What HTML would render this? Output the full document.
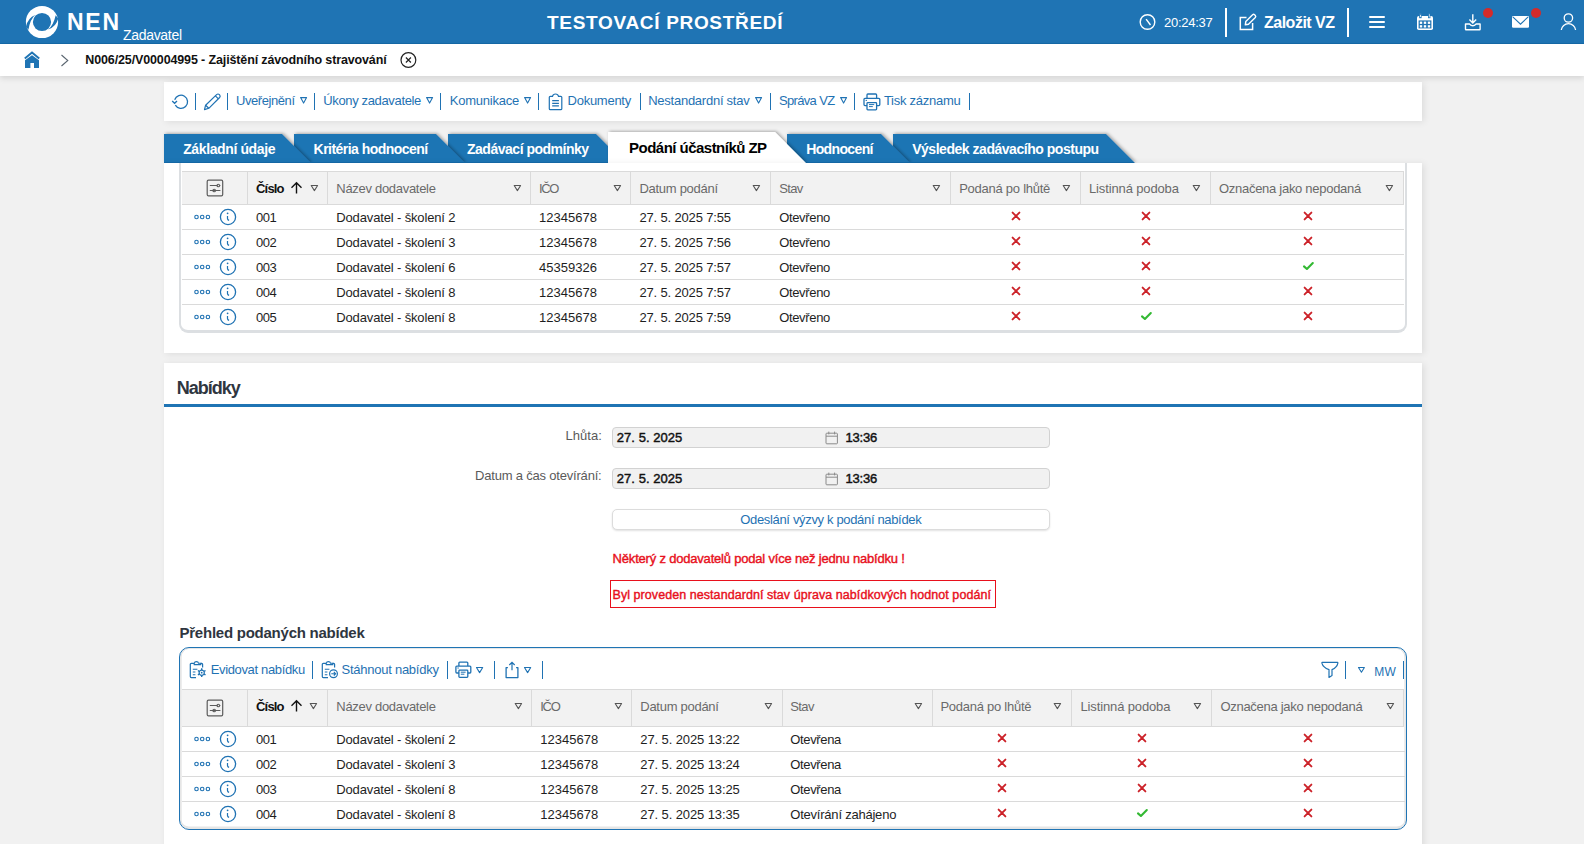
<!DOCTYPE html>
<html><head><meta charset="utf-8"><style>
html,body{margin:0;padding:0;}
body{width:1584px;height:844px;overflow:hidden;position:relative;background:#f1f1f1;font-family:"Liberation Sans",sans-serif;}
.t{position:absolute;white-space:nowrap;}
svg{overflow:visible;}
</style></head><body>
<div style="position:absolute;left:0px;top:0px;width:1584px;height:44px;background:#1f74b4;"></div>
<div style="position:absolute;left:0px;top:43px;width:1584px;height:1px;background:#156aa9;"></div>
<svg style="position:absolute;left:24px;top:4px;" width="36" height="36" viewBox="0 0 36 36">
<defs><mask id="lm"><rect width="36" height="36" fill="#fff"/>
<circle cx="18" cy="18" r="9.1" fill="#000"/>
<path d="M2 22.8 Q3.8 14 11.2 11.1 Q6.4 14.8 4.4 25.8 Z" fill="#000"/>
<path d="M34.2 14.4 Q32.4 22.4 24.2 25.4 Q29.4 21.4 31.7 11.2 Z" fill="#000"/>
</mask></defs>
<circle cx="18" cy="18" r="16.1" fill="#fff" mask="url(#lm)"/>
</svg>
<div class="t" style="left:67.00px;top:10.50px;font-size:23px;line-height:23px;color:#fff;font-weight:bold;letter-spacing:1.750px;">NEN</div>
<div class="t" style="left:123.00px;top:27.70px;font-size:14px;line-height:14px;color:#fff;letter-spacing:-0.312px;">Zadavatel</div>
<div class="t" style="left:547.00px;top:13.00px;font-size:19px;line-height:19px;color:#fff;font-weight:bold;letter-spacing:0.688px;">TESTOVACÍ PROSTŘEDÍ</div>
<svg style="position:absolute;left:1138px;top:13px;" width="19" height="19" viewBox="0 0 19 19"><circle cx="9.5" cy="9" r="7.3" fill="none" stroke="#fff" stroke-width="1.4"/><path d="M8.1 6.2 L12.5 12" stroke="#fff" stroke-width="1.4" fill="none"/></svg>
<div class="t" style="left:1164.00px;top:15.80px;font-size:13px;line-height:13px;color:#fff;letter-spacing:-0.275px;">20:24:37</div>
<div style="position:absolute;left:1225px;top:8px;width:2px;height:29px;background:#fff;"></div>
<svg style="position:absolute;left:1238px;top:12px;" width="20" height="20" viewBox="0 0 20 20"><path d="M8.5 5.5 H2.3 V17.6 H14.6 V11" fill="none" stroke="#fff" stroke-width="1.5"/><path d="M7.3 12.8 L7.8 9.6 L14.6 2.8 Q15.6 1.9 16.6 2.8 L17.3 3.5 Q18.2 4.5 17.3 5.5 L10.5 12.3 Z" fill="none" stroke="#fff" stroke-width="1.4" stroke-linejoin="round"/></svg>
<div class="t" style="left:1264.00px;top:14.50px;font-size:16px;line-height:16px;color:#fff;font-weight:bold;letter-spacing:-0.500px;">Založit VZ</div>
<div style="position:absolute;left:1347px;top:8px;width:2px;height:29px;background:#fff;"></div>
<div style="position:absolute;left:1369px;top:15.5px;width:16px;height:2.3px;background:#fff;border-radius:1.2px;"></div>
<div style="position:absolute;left:1369px;top:20.8px;width:16px;height:2.3px;background:#fff;border-radius:1.2px;"></div>
<div style="position:absolute;left:1369px;top:26.2px;width:16px;height:2.3px;background:#fff;border-radius:1.2px;"></div>
<svg style="position:absolute;left:1416px;top:13px;" width="18" height="18" viewBox="0 0 18 18"><rect x="1" y="3" width="16" height="14" rx="1.8" fill="#fff"/>
<rect x="2.6" y="7.4" width="12.8" height="8" fill="#1f74b4"/>
<g fill="#fff"><rect x="3.8" y="8.6" width="2.4" height="2.3"/><rect x="7.8" y="8.6" width="2.4" height="2.3"/><rect x="11.8" y="8.6" width="2.4" height="2.3"/>
<rect x="3.8" y="12.2" width="2.4" height="2.3"/><rect x="7.8" y="12.2" width="2.4" height="2.3"/><rect x="11.8" y="12.2" width="2.4" height="2.3"/></g>
<rect x="3.6" y="0.8" width="1.6" height="4" fill="#fff" stroke="#1f74b4" stroke-width="0.8"/><rect x="12.4" y="0.8" width="1.6" height="4" fill="#fff" stroke="#1f74b4" stroke-width="0.8"/></svg>
<svg style="position:absolute;left:1463px;top:13px;" width="20" height="20" viewBox="0 0 20 20"><path d="M9.8 1.3 V9.5 M6.4 6.6 L9.8 10 L13.2 6.6" fill="none" stroke="#fff" stroke-width="1.4"/>
<path d="M2.5 11 H6.5 Q9.8 14.5 13.1 11 H17.1 V16.3 Q17.1 16.8 16.6 16.8 H3 Q2.5 16.8 2.5 16.3 Z" fill="none" stroke="#fff" stroke-width="1.4" stroke-linejoin="round"/></svg>
<svg style="position:absolute;left:1511px;top:14px;" width="20" height="16" viewBox="0 0 20 16"><rect x="1" y="2" width="17" height="11.7" rx="1.2" fill="#fff"/><path d="M1.8 2.8 L9.5 10.2 L17.2 2.8" fill="none" stroke="#1f74b4" stroke-width="1.1"/></svg>
<div style="position:absolute;left:1483px;top:8px;width:10px;height:10px;background:#d32b2b;border-radius:50%;"></div>
<div style="position:absolute;left:1531px;top:8px;width:10px;height:10px;background:#d32b2b;border-radius:50%;"></div>
<svg style="position:absolute;left:1559px;top:12px;" width="20" height="20" viewBox="0 0 20 20"><circle cx="9.4" cy="6" r="4.2" fill="none" stroke="#fff" stroke-width="1.3"/><path d="M2.3 18 A7.2 7.2 0 0 1 16.6 18" fill="none" stroke="#fff" stroke-width="1.3"/></svg>
<div style="position:absolute;left:0px;top:44px;width:1584px;height:32px;background:#fff;box-shadow:0 2px 6px rgba(0,0,0,0.13);z-index:2;"></div>
<svg style="position:absolute;left:22px;top:50px;z-index:3;" width="20" height="20" viewBox="0 0 20 20"><path d="M2.8 8.6 L10 2.6 L17.2 8.6" fill="none" stroke="#1f74b4" stroke-width="2"/>
<path d="M3 10.3 L10 5.2 L17 10.3 V18 H12 V13 H8.4 V18 H3 Z" fill="#1f74b4"/></svg>
<svg style="position:absolute;left:58px;top:52px;z-index:3;" width="14" height="16" viewBox="0 0 14 16"><path d="M3.5 3 L9.8 8.5 L3.5 14" fill="none" stroke="#5a6570" stroke-width="1.1"/></svg>
<div class="t" style="left:85.30px;top:53.90px;font-size:12.5px;line-height:12.5px;color:#111;font-weight:bold;letter-spacing:-0.131px;z-index:3;">N006/25/V00004995 - Zajištění závodního stravování</div>
<svg style="position:absolute;left:398px;top:50px;z-index:3;" width="20" height="20" viewBox="0 0 20 20"><circle cx="10.4" cy="10" r="7.4" fill="none" stroke="#222" stroke-width="1.2"/><path d="M7.9 7.5 L12.9 12.5 M12.9 7.5 L7.9 12.5" stroke="#222" stroke-width="1.2"/></svg>
<div style="position:absolute;left:164px;top:82px;width:1258px;height:39px;background:#fff;box-shadow:2px 1px 7px rgba(0,0,0,0.09);"></div>
<svg style="position:absolute;left:170px;top:92px;" width="20" height="20" viewBox="0 0 20 20"><path d="M5.3 13.2 A6.6 6.6 0 1 0 4.7 7.7" fill="none" stroke="#1f72b3" stroke-width="1.3"/>
<path d="M2.2 9 L4.6 11.3 L7 9" fill="none" stroke="#1f72b3" stroke-width="1.3"/></svg>
<div style="position:absolute;left:195px;top:93px;width:1.2px;height:17px;background:#1f72b3;"></div>
<svg style="position:absolute;left:202px;top:92px;" width="20" height="20" viewBox="0 0 20 20"><path d="M2.5 17.6 L3.6 13.2 L14.6 2.6 Q16 1.4 17.4 2.6 L17.6 2.8 Q18.8 4.2 17.6 5.5 L6.8 16.3 Z" fill="none" stroke="#1f72b3" stroke-width="1.2" stroke-linejoin="round"/>
<path d="M3.6 13.2 L6.8 16.3 M13.4 3.8 L16.4 6.8" stroke="#1f72b3" stroke-width="1.2"/></svg>
<div style="position:absolute;left:227px;top:93px;width:1.2px;height:17px;background:#1f72b3;"></div>
<div class="t" style="left:236.00px;top:94.40px;font-size:13px;line-height:13px;color:#1f72b3;letter-spacing:-0.431px;">Uveřejnění</div>
<svg style="position:absolute;left:298.5px;top:96px;" width="9.2" height="9.2" viewBox="0 0 9.2 9.2"><path d="M1.6 1.6 H7.6000000000000005 L4.6 7.12 Z" fill="none" stroke="#1f72b3" stroke-width="1.1" stroke-linejoin="round"/></svg>
<div style="position:absolute;left:314px;top:93px;width:1.2px;height:17px;background:#1f72b3;"></div>
<div class="t" style="left:323.30px;top:94.40px;font-size:13px;line-height:13px;color:#1f72b3;letter-spacing:-0.358px;">Úkony zadavatele</div>
<svg style="position:absolute;left:425px;top:96px;" width="9.2" height="9.2" viewBox="0 0 9.2 9.2"><path d="M1.6 1.6 H7.6000000000000005 L4.6 7.12 Z" fill="none" stroke="#1f72b3" stroke-width="1.1" stroke-linejoin="round"/></svg>
<div style="position:absolute;left:440px;top:93px;width:1.2px;height:17px;background:#1f72b3;"></div>
<div class="t" style="left:449.70px;top:94.40px;font-size:13px;line-height:13px;color:#1f72b3;letter-spacing:-0.211px;">Komunikace</div>
<svg style="position:absolute;left:523.4px;top:96px;" width="9.2" height="9.2" viewBox="0 0 9.2 9.2"><path d="M1.6 1.6 H7.6000000000000005 L4.6 7.12 Z" fill="none" stroke="#1f72b3" stroke-width="1.1" stroke-linejoin="round"/></svg>
<div style="position:absolute;left:538px;top:93px;width:1.2px;height:17px;background:#1f72b3;"></div>
<svg style="position:absolute;left:546px;top:92px;" width="18" height="19" viewBox="0 0 18 19"><path d="M6.5 4.3 H4.3 Q3.3 4.3 3.3 5.3 V16.8 Q3.3 17.7 4.3 17.7 H14.8 Q15.8 17.7 15.8 16.8 V5.3 Q15.8 4.3 14.8 4.3 H12.5 Q12 2 9.5 2 Q7 2 6.5 4.3 Z" fill="none" stroke="#1f72b3" stroke-width="1.2"/>
<path d="M6.2 8.7 H12.9 M6.2 11.4 H12.9 M6.2 13.9 H12.9" stroke="#1f72b3" stroke-width="1.3"/></svg>
<div class="t" style="left:567.60px;top:94.40px;font-size:13px;line-height:13px;color:#1f72b3;letter-spacing:-0.269px;">Dokumenty</div>
<div style="position:absolute;left:639.5px;top:93px;width:1.2px;height:17px;background:#1f72b3;"></div>
<div class="t" style="left:648.20px;top:94.40px;font-size:13px;line-height:13px;color:#1f72b3;letter-spacing:-0.250px;">Nestandardní stav</div>
<svg style="position:absolute;left:754px;top:96px;" width="9.2" height="9.2" viewBox="0 0 9.2 9.2"><path d="M1.6 1.6 H7.6000000000000005 L4.6 7.12 Z" fill="none" stroke="#1f72b3" stroke-width="1.1" stroke-linejoin="round"/></svg>
<div style="position:absolute;left:769.5px;top:93px;width:1.2px;height:17px;background:#1f72b3;"></div>
<div class="t" style="left:778.90px;top:94.40px;font-size:13px;line-height:13px;color:#1f72b3;letter-spacing:-0.647px;">Správa VZ</div>
<svg style="position:absolute;left:839.4px;top:96px;" width="9.2" height="9.2" viewBox="0 0 9.2 9.2"><path d="M1.6 1.6 H7.6000000000000005 L4.6 7.12 Z" fill="none" stroke="#1f72b3" stroke-width="1.1" stroke-linejoin="round"/></svg>
<div style="position:absolute;left:854.3px;top:93px;width:1.2px;height:17px;background:#1f72b3;"></div>
<svg style="position:absolute;left:862px;top:92px;" width="20" height="20" viewBox="0 0 20 20"><path d="M5 6.3 V2.9 Q5 2 5.9 2 H13.7 Q14.6 2 14.6 2.9 V6.3" fill="none" stroke="#1f72b3" stroke-width="1.3"/>
<path d="M5 13.6 H3 Q2 13.6 2 12.6 V7.3 Q2 6.3 3 6.3 H16.8 Q17.8 6.3 17.8 7.3 V12.6 Q17.8 13.6 16.8 13.6 H14.6" fill="none" stroke="#1f72b3" stroke-width="1.3"/>
<rect x="5" y="10.6" width="9.6" height="7.3" rx="0.8" fill="none" stroke="#1f72b3" stroke-width="1.3"/>
<path d="M7 12.6 H12.2 M7 14.6 H10.8 M3.6 8.4 H5" stroke="#1f72b3" stroke-width="1"/></svg>
<div class="t" style="left:883.90px;top:94.20px;font-size:13px;line-height:13px;color:#1f72b3;letter-spacing:-0.250px;">Tisk záznamu</div>
<div style="position:absolute;left:969px;top:93px;width:1.2px;height:17px;background:#1f72b3;"></div>
<svg style="position:absolute;left:0px;top:0px;" width="1584" height="170" viewBox="0 0 1584 170"><defs><filter id="ts" x="-10%" y="-30%" width="120%" height="160%"><feDropShadow dx="1.4" dy="-0.8" stdDeviation="1.4" flood-color="#000" flood-opacity="0.3"/></filter></defs><polygon points="893,163 893,134 1106,134 1135,163" fill="#1f74b4" filter="url(#ts)"/><polygon points="787,163 787,134 881,134 910,163" fill="#1f74b4" filter="url(#ts)"/><polygon points="448,163 448,134 596,134 625,163" fill="#1f74b4" filter="url(#ts)"/><polygon points="294,163 294,134 436,134 465,163" fill="#1f74b4" filter="url(#ts)"/><polygon points="164,163 164,134 282,134 311,163" fill="#1f74b4" filter="url(#ts)"/><rect x="164" y="162" width="146" height="1" fill="#156aa9"/><rect x="294" y="162" width="170" height="1" fill="#156aa9"/><rect x="448" y="162" width="176" height="1" fill="#156aa9"/><rect x="787" y="162" width="122" height="1" fill="#156aa9"/><rect x="893" y="162" width="241" height="1" fill="#156aa9"/><polygon points="608,163 608,132 775,132 806,163" fill="#fff" filter="url(#ts)"/></svg>
<div class="t" style="left:183.20px;top:141.80px;font-size:14px;line-height:14px;color:#fff;font-weight:bold;letter-spacing:-0.381px;">Základní údaje</div>
<div class="t" style="left:313.60px;top:141.80px;font-size:14px;line-height:14px;color:#fff;font-weight:bold;letter-spacing:-0.537px;">Kritéria hodnocení</div>
<div class="t" style="left:467.00px;top:141.80px;font-size:14px;line-height:14px;color:#fff;font-weight:bold;letter-spacing:-0.487px;">Zadávací podmínky</div>
<div class="t" style="left:629.10px;top:139.80px;font-size:15px;line-height:15px;color:#000;font-weight:bold;letter-spacing:-0.528px;">Podání účastníků ZP</div>
<div class="t" style="left:806.20px;top:141.80px;font-size:14px;line-height:14px;color:#fff;font-weight:bold;letter-spacing:-0.634px;">Hodnocení</div>
<div class="t" style="left:912.20px;top:141.80px;font-size:14px;line-height:14px;color:#fff;font-weight:bold;letter-spacing:-0.471px;">Výsledek zadávacího postupu</div>
<div style="position:absolute;left:164px;top:163px;width:1258px;height:190px;background:#fff;box-shadow:2px 1px 7px rgba(0,0,0,0.09);"></div>
<div style="position:absolute;left:179.4px;top:163px;width:1227.6px;height:169.5px;border:2.6px solid #dcdfe2;border-bottom-width:3.6px;border-top:none;border-radius:0 0 9px 9px;box-sizing:border-box;"></div>
<div style="position:absolute;left:182px;top:171px;width:1222px;height:34px;background:#f2f2f2;border-top:1px solid #dadada;border-bottom:1px solid #dadada;border-right:1px solid #dadada;box-sizing:border-box;"></div>
<div style="position:absolute;left:247px;top:171px;width:1px;height:33px;background:#dadada;"></div>
<div style="position:absolute;left:327px;top:171px;width:1px;height:33px;background:#dadada;"></div>
<div style="position:absolute;left:530px;top:171px;width:1px;height:33px;background:#dadada;"></div>
<div style="position:absolute;left:630px;top:171px;width:1px;height:33px;background:#dadada;"></div>
<div style="position:absolute;left:770px;top:171px;width:1px;height:33px;background:#dadada;"></div>
<div style="position:absolute;left:950px;top:171px;width:1px;height:33px;background:#dadada;"></div>
<div style="position:absolute;left:1080px;top:171px;width:1px;height:33px;background:#dadada;"></div>
<div style="position:absolute;left:1210px;top:171px;width:1px;height:33px;background:#dadada;"></div>
<svg style="position:absolute;left:206.0px;top:178.5px;" width="18" height="18" viewBox="0 0 18 18"><rect x="1.2" y="1.1" width="15.5" height="15.8" rx="1.3" fill="none" stroke="#5c5c5c" stroke-width="1.2"/><path d="M3.8 6.5 H11.6 M3.8 11.5 H14.4 M13.2 6.5 H14.4" stroke="#5c5c5c" stroke-width="1.1"/><circle cx="12.3" cy="6.5" r="1.3" fill="none" stroke="#5c5c5c" stroke-width="1.1"/><circle cx="8.2" cy="11.5" r="1.3" fill="none" stroke="#5c5c5c" stroke-width="1.1"/></svg>
<div class="t" style="left:256.00px;top:182.00px;font-size:13px;line-height:13px;color:#111;font-weight:bold;letter-spacing:-0.812px;">Číslo</div>
<svg style="position:absolute;left:290.2px;top:180.5px;" width="13" height="14" viewBox="0 0 13 14"><path d="M6.5 12.5 V1.8 M1.5 6.8 L6.5 1.8 L11.5 6.8" fill="none" stroke="#111" stroke-width="1.4"/></svg>
<svg style="position:absolute;left:309.8px;top:184px;" width="10" height="9" viewBox="0 0 10 9"><path d="M1.2 1.5 H7.6 L4.4 6.6 Z" fill="none" stroke="#555" stroke-width="1.05" stroke-linejoin="round"/></svg>
<div class="t" style="left:336.30px;top:182.00px;font-size:13px;line-height:13px;color:#6a6a6a;letter-spacing:-0.295px;">Název dodavatele</div>
<svg style="position:absolute;left:512.5px;top:184px;" width="10" height="9" viewBox="0 0 10 9"><path d="M1.2 1.5 H7.6 L4.4 6.6 Z" fill="none" stroke="#555" stroke-width="1.05" stroke-linejoin="round"/></svg>
<div class="t" style="left:538.90px;top:182.00px;font-size:13px;line-height:13px;color:#6a6a6a;letter-spacing:-1.312px;">IČO</div>
<svg style="position:absolute;left:612.6px;top:184px;" width="10" height="9" viewBox="0 0 10 9"><path d="M1.2 1.5 H7.6 L4.4 6.6 Z" fill="none" stroke="#555" stroke-width="1.05" stroke-linejoin="round"/></svg>
<div class="t" style="left:639.40px;top:182.00px;font-size:13px;line-height:13px;color:#6a6a6a;letter-spacing:-0.275px;">Datum podání</div>
<svg style="position:absolute;left:752.3px;top:184px;" width="10" height="9" viewBox="0 0 10 9"><path d="M1.2 1.5 H7.6 L4.4 6.6 Z" fill="none" stroke="#555" stroke-width="1.05" stroke-linejoin="round"/></svg>
<div class="t" style="left:779.20px;top:182.00px;font-size:13px;line-height:13px;color:#6a6a6a;letter-spacing:-0.633px;">Stav</div>
<svg style="position:absolute;left:932.3px;top:184px;" width="10" height="9" viewBox="0 0 10 9"><path d="M1.2 1.5 H7.6 L4.4 6.6 Z" fill="none" stroke="#555" stroke-width="1.05" stroke-linejoin="round"/></svg>
<div class="t" style="left:959.20px;top:182.00px;font-size:13px;line-height:13px;color:#6a6a6a;letter-spacing:-0.254px;">Podaná po lhůtě</div>
<svg style="position:absolute;left:1062px;top:184px;" width="10" height="9" viewBox="0 0 10 9"><path d="M1.2 1.5 H7.6 L4.4 6.6 Z" fill="none" stroke="#555" stroke-width="1.05" stroke-linejoin="round"/></svg>
<div class="t" style="left:1089.00px;top:182.00px;font-size:13px;line-height:13px;color:#6a6a6a;letter-spacing:-0.134px;">Listinná podoba</div>
<svg style="position:absolute;left:1192px;top:184px;" width="10" height="9" viewBox="0 0 10 9"><path d="M1.2 1.5 H7.6 L4.4 6.6 Z" fill="none" stroke="#555" stroke-width="1.05" stroke-linejoin="round"/></svg>
<div class="t" style="left:1219.00px;top:182.00px;font-size:13px;line-height:13px;color:#6a6a6a;letter-spacing:-0.283px;">Označena jako nepodaná</div>
<svg style="position:absolute;left:1385px;top:184px;" width="10" height="9" viewBox="0 0 10 9"><path d="M1.2 1.5 H7.6 L4.4 6.6 Z" fill="none" stroke="#555" stroke-width="1.05" stroke-linejoin="round"/></svg>
<div style="position:absolute;left:182px;top:229px;width:1222px;height:1px;background:#dadada;"></div>
<div style="position:absolute;left:182px;top:254px;width:1222px;height:1px;background:#dadada;"></div>
<div style="position:absolute;left:182px;top:279px;width:1222px;height:1px;background:#dadada;"></div>
<div style="position:absolute;left:182px;top:304px;width:1222px;height:1px;background:#dadada;"></div>
<svg style="position:absolute;left:194px;top:213px;" width="18" height="8" viewBox="0 0 18 8"><circle cx="2.5" cy="4" r="1.75" fill="none" stroke="#1f72b3" stroke-width="1.15"/><circle cx="8.2" cy="4" r="1.75" fill="none" stroke="#1f72b3" stroke-width="1.15"/><circle cx="13.9" cy="4" r="1.75" fill="none" stroke="#1f72b3" stroke-width="1.15"/></svg>
<svg style="position:absolute;left:219px;top:208px;" width="18" height="18" viewBox="0 0 18 18"><circle cx="9" cy="9" r="7.6" fill="none" stroke="#1f72b3" stroke-width="1.3"/><circle cx="8.6" cy="5.3" r="0.9" fill="#1f72b3"/><path d="M8.5 7.9 V10.6 Q8.6 11.9 10.1 12.3" fill="none" stroke="#1f72b3" stroke-width="1.2"/></svg>
<div class="t" style="left:256.00px;top:211.00px;font-size:13px;line-height:13px;color:#1e1e1e;letter-spacing:-0.525px;">001</div>
<div class="t" style="left:336.30px;top:211.00px;font-size:13px;line-height:13px;color:#1e1e1e;letter-spacing:-0.146px;">Dodavatel - školení 2</div>
<div class="t" style="left:538.90px;top:211.00px;font-size:13px;line-height:13px;color:#1e1e1e;letter-spacing:0.018px;">12345678</div>
<div class="t" style="left:639.40px;top:211.00px;font-size:13px;line-height:13px;color:#1e1e1e;letter-spacing:-0.153px;">27. 5. 2025 7:55</div>
<div class="t" style="left:779.20px;top:211.00px;font-size:13px;line-height:13px;color:#1e1e1e;letter-spacing:-0.343px;">Otevřeno</div>
<svg style="position:absolute;left:1011.2px;top:211px;" width="10" height="10" viewBox="0 0 10 10"><path d="M1.6 1.6 L8.4 8.4 M8.4 1.6 L1.6 8.4" stroke="#cc2229" stroke-width="1.9" stroke-linecap="round"/></svg>
<svg style="position:absolute;left:1141.1px;top:211px;" width="10" height="10" viewBox="0 0 10 10"><path d="M1.6 1.6 L8.4 8.4 M8.4 1.6 L1.6 8.4" stroke="#cc2229" stroke-width="1.9" stroke-linecap="round"/></svg>
<svg style="position:absolute;left:1302.8px;top:211px;" width="10" height="10" viewBox="0 0 10 10"><path d="M1.6 1.6 L8.4 8.4 M8.4 1.6 L1.6 8.4" stroke="#cc2229" stroke-width="1.9" stroke-linecap="round"/></svg>
<svg style="position:absolute;left:194px;top:238px;" width="18" height="8" viewBox="0 0 18 8"><circle cx="2.5" cy="4" r="1.75" fill="none" stroke="#1f72b3" stroke-width="1.15"/><circle cx="8.2" cy="4" r="1.75" fill="none" stroke="#1f72b3" stroke-width="1.15"/><circle cx="13.9" cy="4" r="1.75" fill="none" stroke="#1f72b3" stroke-width="1.15"/></svg>
<svg style="position:absolute;left:219px;top:233px;" width="18" height="18" viewBox="0 0 18 18"><circle cx="9" cy="9" r="7.6" fill="none" stroke="#1f72b3" stroke-width="1.3"/><circle cx="8.6" cy="5.3" r="0.9" fill="#1f72b3"/><path d="M8.5 7.9 V10.6 Q8.6 11.9 10.1 12.3" fill="none" stroke="#1f72b3" stroke-width="1.2"/></svg>
<div class="t" style="left:256.00px;top:236.00px;font-size:13px;line-height:13px;color:#1e1e1e;letter-spacing:-0.525px;">002</div>
<div class="t" style="left:336.30px;top:236.00px;font-size:13px;line-height:13px;color:#1e1e1e;letter-spacing:-0.146px;">Dodavatel - školení 3</div>
<div class="t" style="left:538.90px;top:236.00px;font-size:13px;line-height:13px;color:#1e1e1e;letter-spacing:0.018px;">12345678</div>
<div class="t" style="left:639.40px;top:236.00px;font-size:13px;line-height:13px;color:#1e1e1e;letter-spacing:-0.153px;">27. 5. 2025 7:56</div>
<div class="t" style="left:779.20px;top:236.00px;font-size:13px;line-height:13px;color:#1e1e1e;letter-spacing:-0.343px;">Otevřeno</div>
<svg style="position:absolute;left:1011.2px;top:236px;" width="10" height="10" viewBox="0 0 10 10"><path d="M1.6 1.6 L8.4 8.4 M8.4 1.6 L1.6 8.4" stroke="#cc2229" stroke-width="1.9" stroke-linecap="round"/></svg>
<svg style="position:absolute;left:1141.1px;top:236px;" width="10" height="10" viewBox="0 0 10 10"><path d="M1.6 1.6 L8.4 8.4 M8.4 1.6 L1.6 8.4" stroke="#cc2229" stroke-width="1.9" stroke-linecap="round"/></svg>
<svg style="position:absolute;left:1302.8px;top:236px;" width="10" height="10" viewBox="0 0 10 10"><path d="M1.6 1.6 L8.4 8.4 M8.4 1.6 L1.6 8.4" stroke="#cc2229" stroke-width="1.9" stroke-linecap="round"/></svg>
<svg style="position:absolute;left:194px;top:263px;" width="18" height="8" viewBox="0 0 18 8"><circle cx="2.5" cy="4" r="1.75" fill="none" stroke="#1f72b3" stroke-width="1.15"/><circle cx="8.2" cy="4" r="1.75" fill="none" stroke="#1f72b3" stroke-width="1.15"/><circle cx="13.9" cy="4" r="1.75" fill="none" stroke="#1f72b3" stroke-width="1.15"/></svg>
<svg style="position:absolute;left:219px;top:258px;" width="18" height="18" viewBox="0 0 18 18"><circle cx="9" cy="9" r="7.6" fill="none" stroke="#1f72b3" stroke-width="1.3"/><circle cx="8.6" cy="5.3" r="0.9" fill="#1f72b3"/><path d="M8.5 7.9 V10.6 Q8.6 11.9 10.1 12.3" fill="none" stroke="#1f72b3" stroke-width="1.2"/></svg>
<div class="t" style="left:256.00px;top:261.00px;font-size:13px;line-height:13px;color:#1e1e1e;letter-spacing:-0.525px;">003</div>
<div class="t" style="left:336.30px;top:261.00px;font-size:13px;line-height:13px;color:#1e1e1e;letter-spacing:-0.146px;">Dodavatel - školení 6</div>
<div class="t" style="left:538.90px;top:261.00px;font-size:13px;line-height:13px;color:#1e1e1e;letter-spacing:0.018px;">45359326</div>
<div class="t" style="left:639.40px;top:261.00px;font-size:13px;line-height:13px;color:#1e1e1e;letter-spacing:-0.153px;">27. 5. 2025 7:57</div>
<div class="t" style="left:779.20px;top:261.00px;font-size:13px;line-height:13px;color:#1e1e1e;letter-spacing:-0.343px;">Otevřeno</div>
<svg style="position:absolute;left:1011.2px;top:261px;" width="10" height="10" viewBox="0 0 10 10"><path d="M1.6 1.6 L8.4 8.4 M8.4 1.6 L1.6 8.4" stroke="#cc2229" stroke-width="1.9" stroke-linecap="round"/></svg>
<svg style="position:absolute;left:1141.1px;top:261px;" width="10" height="10" viewBox="0 0 10 10"><path d="M1.6 1.6 L8.4 8.4 M8.4 1.6 L1.6 8.4" stroke="#cc2229" stroke-width="1.9" stroke-linecap="round"/></svg>
<svg style="position:absolute;left:1301.8px;top:261px;" width="12" height="10" viewBox="0 0 12 10"><path d="M2 5.4 L4.9 8 L10.8 2" fill="none" stroke="#33b933" stroke-width="2.1" stroke-linecap="round" stroke-linejoin="round"/></svg>
<svg style="position:absolute;left:194px;top:288px;" width="18" height="8" viewBox="0 0 18 8"><circle cx="2.5" cy="4" r="1.75" fill="none" stroke="#1f72b3" stroke-width="1.15"/><circle cx="8.2" cy="4" r="1.75" fill="none" stroke="#1f72b3" stroke-width="1.15"/><circle cx="13.9" cy="4" r="1.75" fill="none" stroke="#1f72b3" stroke-width="1.15"/></svg>
<svg style="position:absolute;left:219px;top:283px;" width="18" height="18" viewBox="0 0 18 18"><circle cx="9" cy="9" r="7.6" fill="none" stroke="#1f72b3" stroke-width="1.3"/><circle cx="8.6" cy="5.3" r="0.9" fill="#1f72b3"/><path d="M8.5 7.9 V10.6 Q8.6 11.9 10.1 12.3" fill="none" stroke="#1f72b3" stroke-width="1.2"/></svg>
<div class="t" style="left:256.00px;top:286.00px;font-size:13px;line-height:13px;color:#1e1e1e;letter-spacing:-0.525px;">004</div>
<div class="t" style="left:336.30px;top:286.00px;font-size:13px;line-height:13px;color:#1e1e1e;letter-spacing:-0.146px;">Dodavatel - školení 8</div>
<div class="t" style="left:538.90px;top:286.00px;font-size:13px;line-height:13px;color:#1e1e1e;letter-spacing:0.018px;">12345678</div>
<div class="t" style="left:639.40px;top:286.00px;font-size:13px;line-height:13px;color:#1e1e1e;letter-spacing:-0.153px;">27. 5. 2025 7:57</div>
<div class="t" style="left:779.20px;top:286.00px;font-size:13px;line-height:13px;color:#1e1e1e;letter-spacing:-0.343px;">Otevřeno</div>
<svg style="position:absolute;left:1011.2px;top:286px;" width="10" height="10" viewBox="0 0 10 10"><path d="M1.6 1.6 L8.4 8.4 M8.4 1.6 L1.6 8.4" stroke="#cc2229" stroke-width="1.9" stroke-linecap="round"/></svg>
<svg style="position:absolute;left:1141.1px;top:286px;" width="10" height="10" viewBox="0 0 10 10"><path d="M1.6 1.6 L8.4 8.4 M8.4 1.6 L1.6 8.4" stroke="#cc2229" stroke-width="1.9" stroke-linecap="round"/></svg>
<svg style="position:absolute;left:1302.8px;top:286px;" width="10" height="10" viewBox="0 0 10 10"><path d="M1.6 1.6 L8.4 8.4 M8.4 1.6 L1.6 8.4" stroke="#cc2229" stroke-width="1.9" stroke-linecap="round"/></svg>
<svg style="position:absolute;left:194px;top:313px;" width="18" height="8" viewBox="0 0 18 8"><circle cx="2.5" cy="4" r="1.75" fill="none" stroke="#1f72b3" stroke-width="1.15"/><circle cx="8.2" cy="4" r="1.75" fill="none" stroke="#1f72b3" stroke-width="1.15"/><circle cx="13.9" cy="4" r="1.75" fill="none" stroke="#1f72b3" stroke-width="1.15"/></svg>
<svg style="position:absolute;left:219px;top:308px;" width="18" height="18" viewBox="0 0 18 18"><circle cx="9" cy="9" r="7.6" fill="none" stroke="#1f72b3" stroke-width="1.3"/><circle cx="8.6" cy="5.3" r="0.9" fill="#1f72b3"/><path d="M8.5 7.9 V10.6 Q8.6 11.9 10.1 12.3" fill="none" stroke="#1f72b3" stroke-width="1.2"/></svg>
<div class="t" style="left:256.00px;top:311.00px;font-size:13px;line-height:13px;color:#1e1e1e;letter-spacing:-0.525px;">005</div>
<div class="t" style="left:336.30px;top:311.00px;font-size:13px;line-height:13px;color:#1e1e1e;letter-spacing:-0.146px;">Dodavatel - školení 8</div>
<div class="t" style="left:538.90px;top:311.00px;font-size:13px;line-height:13px;color:#1e1e1e;letter-spacing:0.018px;">12345678</div>
<div class="t" style="left:639.40px;top:311.00px;font-size:13px;line-height:13px;color:#1e1e1e;letter-spacing:-0.153px;">27. 5. 2025 7:59</div>
<div class="t" style="left:779.20px;top:311.00px;font-size:13px;line-height:13px;color:#1e1e1e;letter-spacing:-0.343px;">Otevřeno</div>
<svg style="position:absolute;left:1011.2px;top:311px;" width="10" height="10" viewBox="0 0 10 10"><path d="M1.6 1.6 L8.4 8.4 M8.4 1.6 L1.6 8.4" stroke="#cc2229" stroke-width="1.9" stroke-linecap="round"/></svg>
<svg style="position:absolute;left:1140.1px;top:311px;" width="12" height="10" viewBox="0 0 12 10"><path d="M2 5.4 L4.9 8 L10.8 2" fill="none" stroke="#33b933" stroke-width="2.1" stroke-linecap="round" stroke-linejoin="round"/></svg>
<svg style="position:absolute;left:1302.8px;top:311px;" width="10" height="10" viewBox="0 0 10 10"><path d="M1.6 1.6 L8.4 8.4 M8.4 1.6 L1.6 8.4" stroke="#cc2229" stroke-width="1.9" stroke-linecap="round"/></svg>
<div style="position:absolute;left:164px;top:363px;width:1258px;height:500px;background:#fff;box-shadow:2px 1px 7px rgba(0,0,0,0.09);"></div>
<div class="t" style="left:176.70px;top:379.00px;font-size:18px;line-height:18px;color:#2f3640;font-weight:bold;letter-spacing:-1.000px;">Nabídky</div>
<div style="position:absolute;left:164px;top:404px;width:1258px;height:3px;background:#1f74b4;"></div>
<div class="t" style="left:565.60px;top:428.90px;font-size:13px;line-height:13px;color:#5a5a5a;">Lhůta:</div>
<div class="t" style="left:475.00px;top:469.20px;font-size:13px;line-height:13px;color:#5a5a5a;letter-spacing:-0.193px;">Datum a čas otevírání:</div>
<div style="position:absolute;left:612px;top:427px;width:438px;height:21px;background:#f1f1f1;border:1px solid #d2d2d2;border-radius:4px;box-sizing:border-box;"></div>
<div class="t" style="left:616.80px;top:431.00px;font-size:13px;line-height:13px;color:#111;letter-spacing:0.040px;-webkit-text-stroke:0.45px #111;">27. 5. 2025</div>
<svg style="position:absolute;left:824.5px;top:431px;" width="14" height="14" viewBox="0 0 14 14"><rect x="1" y="2.2" width="11.4" height="10.6" rx="0.8" fill="none" stroke="#8a8a8a" stroke-width="1"/><path d="M1 5.2 H12.4 M3.8 0.6 V3.4 M9.6 0.6 V3.4" stroke="#8a8a8a" stroke-width="1"/></svg>
<div class="t" style="left:845.60px;top:431.00px;font-size:13px;line-height:13px;color:#111;letter-spacing:-0.225px;-webkit-text-stroke:0.45px #111;">13:36</div>
<div style="position:absolute;left:612px;top:468px;width:438px;height:21px;background:#f1f1f1;border:1px solid #d2d2d2;border-radius:4px;box-sizing:border-box;"></div>
<div class="t" style="left:616.80px;top:472.00px;font-size:13px;line-height:13px;color:#111;letter-spacing:0.040px;-webkit-text-stroke:0.45px #111;">27. 5. 2025</div>
<svg style="position:absolute;left:824.5px;top:472px;" width="14" height="14" viewBox="0 0 14 14"><rect x="1" y="2.2" width="11.4" height="10.6" rx="0.8" fill="none" stroke="#8a8a8a" stroke-width="1"/><path d="M1 5.2 H12.4 M3.8 0.6 V3.4 M9.6 0.6 V3.4" stroke="#8a8a8a" stroke-width="1"/></svg>
<div class="t" style="left:845.60px;top:472.00px;font-size:13px;line-height:13px;color:#111;letter-spacing:-0.225px;-webkit-text-stroke:0.45px #111;">13:36</div>
<div style="position:absolute;left:612px;top:509px;width:438px;height:21px;background:#fff;border:1px solid #dcdcdc;border-radius:5px;box-sizing:border-box;box-shadow:0 1px 2px rgba(0,0,0,0.12);"></div>
<div class="t" style="left:740.30px;top:512.80px;font-size:13px;line-height:13px;color:#1f72b3;letter-spacing:-0.338px;">Odeslání výzvy k podání nabídek</div>
<div class="t" style="left:612.60px;top:552.20px;font-size:13px;line-height:13px;color:#e8101c;letter-spacing:-0.195px;-webkit-text-stroke:0.4px #e8101c;">Některý z dodavatelů podal více než jednu nabídku !</div>
<div style="position:absolute;left:610px;top:580px;width:386px;height:28px;border:1px solid #e8101c;box-sizing:border-box;"></div>
<div class="t" style="left:612.50px;top:588.70px;font-size:12.5px;line-height:12.5px;color:#e8101c;letter-spacing:0.062px;-webkit-text-stroke:0.4px #e8101c;">Byl proveden nestandardní stav úprava nabídkových hodnot podání</div>
<div class="t" style="left:179.50px;top:624.80px;font-size:15px;line-height:15px;color:#2f3640;font-weight:bold;letter-spacing:-0.242px;">Přehled podaných nabídek</div>
<div style="position:absolute;left:179px;top:647px;width:1228px;height:183px;border:1.3px solid #1f74b4;border-radius:10px;box-sizing:border-box;box-shadow:inset 1.7px 0 0 #e6e6e6, inset -1.7px 0 0 #e6e6e6, inset 0 -2.6px 0 #e6e6e6, inset 0 1px 0 #e6e6e6;"></div>
<svg style="position:absolute;left:188px;top:660px;" width="20" height="20" viewBox="0 0 20 20"><path d="M6.2 3.3 H3.3 Q2.3 3.3 2.3 4.3 V16.6 Q2.3 17.6 3.3 17.6 H8" fill="none" stroke="#1f72b3" stroke-width="1.2"/>
<path d="M12.8 3.3 H13.6 Q14.6 3.3 14.6 4.3 V7.6" fill="none" stroke="#1f72b3" stroke-width="1.2"/>
<path d="M6.2 4.6 V3.3 Q6.6 1.6 8.4 1.6 Q10.2 1.6 10.6 3.3 H12.8 V4.6 Z" fill="none" stroke="#1f72b3" stroke-width="1.1"/>
<path d="M4.8 9.2 H9.4 M4.8 12 H7.4 M4.8 14.8 H7.4" stroke="#1f72b3" stroke-width="1.1"/>
<g transform="translate(13.7 12.7)"><circle r="2.6" fill="none" stroke="#1f72b3" stroke-width="1.2"/><circle r="0.9" fill="#1f72b3"/>
<path d="M0 -4.4 V-2.8 M0 2.8 V4.4 M-3.8 -2.2 L-2.4 -1.4 M2.4 1.4 L3.8 2.2 M-3.8 2.2 L-2.4 1.4 M2.4 -1.4 L3.8 -2.2" stroke="#1f72b3" stroke-width="1.4"/></g></svg>
<div class="t" style="left:210.70px;top:663.00px;font-size:13px;line-height:13px;color:#1f72b3;letter-spacing:-0.350px;">Evidovat nabídku</div>
<div style="position:absolute;left:312px;top:661px;width:1.2px;height:18px;background:#1f72b3;"></div>
<svg style="position:absolute;left:320px;top:660px;" width="20" height="20" viewBox="0 0 20 20"><path d="M6.2 3.3 H3.3 Q2.3 3.3 2.3 4.3 V16.6 Q2.3 17.6 3.3 17.6 H8" fill="none" stroke="#1f72b3" stroke-width="1.2"/>
<path d="M12.8 3.3 H13.6 Q14.6 3.3 14.6 4.3 V7.6" fill="none" stroke="#1f72b3" stroke-width="1.2"/>
<path d="M6.2 4.6 V3.3 Q6.6 1.6 8.4 1.6 Q10.2 1.6 10.6 3.3 H12.8 V4.6 Z" fill="none" stroke="#1f72b3" stroke-width="1.1"/>
<path d="M4.8 9.2 H9.4 M4.8 12 H7.4 M4.8 14.8 H7.4" stroke="#1f72b3" stroke-width="1.1"/>
<circle cx="13.5" cy="13.7" r="3.9" fill="#fff" stroke="#1f72b3" stroke-width="1.2"/><path d="M11.3 13.7 H15.6 M13.8 11.9 L15.6 13.7 L13.8 15.5" fill="none" stroke="#1f72b3" stroke-width="1.1"/></svg>
<div class="t" style="left:341.50px;top:663.00px;font-size:13px;line-height:13px;color:#1f72b3;letter-spacing:-0.250px;">Stáhnout nabídky</div>
<div style="position:absolute;left:446.5px;top:661px;width:1.2px;height:18px;background:#1f72b3;"></div>
<svg style="position:absolute;left:454px;top:660px;" width="20" height="20" viewBox="0 0 20 20"><path d="M4.9 6 V3.1 Q4.9 2.2 5.8 2.2 H12.9 Q13.8 2.2 13.8 3.1 V6" fill="none" stroke="#1f72b3" stroke-width="1.3"/>
<path d="M4.9 13 H2.8 Q1.9 13 1.9 12.1 V7 Q1.9 6.1 2.8 6.1 H15.9 Q16.8 6.1 16.8 7 V12.1 Q16.8 13 15.9 13 H13.8" fill="none" stroke="#1f72b3" stroke-width="1.3"/>
<rect x="4.9" y="10.2" width="8.9" height="7.2" rx="0.8" fill="none" stroke="#1f72b3" stroke-width="1.3"/>
<path d="M6.8 12.2 H11.6 M6.8 14.2 H10.4 M3.4 8 H4.8" stroke="#1f72b3" stroke-width="1"/></svg>
<svg style="position:absolute;left:474.6px;top:666px;" width="9.2" height="8" viewBox="0 0 9.2 8"><path d="M1.5 1.5 H7.7 L4.6 6.6 Z" fill="none" stroke="#1f72b3" stroke-width="1.1" stroke-linejoin="round"/></svg>
<div style="position:absolute;left:494px;top:661px;width:1.2px;height:18px;background:#1f72b3;"></div>
<svg style="position:absolute;left:503px;top:660px;" width="18" height="20" viewBox="0 0 18 20"><path d="M4.9 7.6 H3.1 V17.6 H14.9 V7.6 H13.1" fill="none" stroke="#1f72b3" stroke-width="1.3" stroke-linejoin="round"/>
<path d="M9 2.3 V10.2 M6.3 5 L9 2.3 L11.7 5" fill="none" stroke="#1f72b3" stroke-width="1.2"/></svg>
<svg style="position:absolute;left:522.5px;top:666px;" width="9.2" height="8" viewBox="0 0 9.2 8"><path d="M1.5 1.5 H7.7 L4.6 6.6 Z" fill="none" stroke="#1f72b3" stroke-width="1.1" stroke-linejoin="round"/></svg>
<div style="position:absolute;left:542px;top:661px;width:1.2px;height:18px;background:#1f72b3;"></div>
<svg style="position:absolute;left:1320px;top:660px;" width="20" height="20" viewBox="0 0 20 20"><path d="M2 2.4 H17.6 Q18 2.4 17.8 3.4 Q17 7.5 12 9.6 V15.6 L9 17.4 V9.6 Q3 7.5 2 3.4 Q1.8 2.4 2 2.4 Z" fill="none" stroke="#1f72b3" stroke-width="1.2" stroke-linejoin="round"/></svg>
<div style="position:absolute;left:1345px;top:661px;width:1.2px;height:18px;background:#1f72b3;"></div>
<svg style="position:absolute;left:1357.2px;top:666px;" width="8.9" height="7.7" viewBox="0 0 8.9 7.7"><path d="M1.5 1.5 H7.4 L4.45 6.3 Z" fill="none" stroke="#1f72b3" stroke-width="1.1" stroke-linejoin="round"/></svg>
<div class="t" style="left:1374.30px;top:665.90px;font-size:12px;line-height:12px;color:#1f72b3;letter-spacing:0.325px;">MW</div>
<div style="position:absolute;left:1403px;top:661px;width:1.2px;height:18px;background:#1f72b3;"></div>
<div style="position:absolute;left:182px;top:689px;width:1222px;height:38px;background:#f2f2f2;border-top:1px solid #dadada;border-bottom:1px solid #dadada;border-right:1px solid #dadada;box-sizing:border-box;"></div>
<div style="position:absolute;left:247px;top:689px;width:1px;height:37px;background:#dadada;"></div>
<div style="position:absolute;left:327px;top:689px;width:1px;height:37px;background:#dadada;"></div>
<div style="position:absolute;left:531px;top:689px;width:1px;height:37px;background:#dadada;"></div>
<div style="position:absolute;left:631px;top:689px;width:1px;height:37px;background:#dadada;"></div>
<div style="position:absolute;left:781.5px;top:689px;width:1px;height:37px;background:#dadada;"></div>
<div style="position:absolute;left:931.5px;top:689px;width:1px;height:37px;background:#dadada;"></div>
<div style="position:absolute;left:1071px;top:689px;width:1px;height:37px;background:#dadada;"></div>
<div style="position:absolute;left:1211px;top:689px;width:1px;height:37px;background:#dadada;"></div>
<svg style="position:absolute;left:206.0px;top:698.5px;" width="18" height="18" viewBox="0 0 18 18"><rect x="1.2" y="1.1" width="15.5" height="15.8" rx="1.3" fill="none" stroke="#5c5c5c" stroke-width="1.2"/><path d="M3.8 6.5 H11.6 M3.8 11.5 H14.4 M13.2 6.5 H14.4" stroke="#5c5c5c" stroke-width="1.1"/><circle cx="12.3" cy="6.5" r="1.3" fill="none" stroke="#5c5c5c" stroke-width="1.1"/><circle cx="8.2" cy="11.5" r="1.3" fill="none" stroke="#5c5c5c" stroke-width="1.1"/></svg>
<div class="t" style="left:256.00px;top:700.00px;font-size:13px;line-height:13px;color:#111;font-weight:bold;letter-spacing:-0.812px;">Číslo</div>
<svg style="position:absolute;left:290.2px;top:698.5px;" width="13" height="14" viewBox="0 0 13 14"><path d="M6.5 12.5 V1.8 M1.5 6.8 L6.5 1.8 L11.5 6.8" fill="none" stroke="#111" stroke-width="1.4"/></svg>
<svg style="position:absolute;left:309.3px;top:702px;" width="10" height="9" viewBox="0 0 10 9"><path d="M1.2 1.5 H7.6 L4.4 6.6 Z" fill="none" stroke="#555" stroke-width="1.05" stroke-linejoin="round"/></svg>
<div class="t" style="left:336.30px;top:700.00px;font-size:13px;line-height:13px;color:#6a6a6a;letter-spacing:-0.295px;">Název dodavatele</div>
<svg style="position:absolute;left:513.5px;top:702px;" width="10" height="9" viewBox="0 0 10 9"><path d="M1.2 1.5 H7.6 L4.4 6.6 Z" fill="none" stroke="#555" stroke-width="1.05" stroke-linejoin="round"/></svg>
<div class="t" style="left:540.30px;top:700.00px;font-size:13px;line-height:13px;color:#6a6a6a;letter-spacing:-1.312px;">IČO</div>
<svg style="position:absolute;left:613.5px;top:702px;" width="10" height="9" viewBox="0 0 10 9"><path d="M1.2 1.5 H7.6 L4.4 6.6 Z" fill="none" stroke="#555" stroke-width="1.05" stroke-linejoin="round"/></svg>
<div class="t" style="left:640.30px;top:700.00px;font-size:13px;line-height:13px;color:#6a6a6a;letter-spacing:-0.275px;">Datum podání</div>
<svg style="position:absolute;left:764px;top:702px;" width="10" height="9" viewBox="0 0 10 9"><path d="M1.2 1.5 H7.6 L4.4 6.6 Z" fill="none" stroke="#555" stroke-width="1.05" stroke-linejoin="round"/></svg>
<div class="t" style="left:790.30px;top:700.00px;font-size:13px;line-height:13px;color:#6a6a6a;letter-spacing:-0.633px;">Stav</div>
<svg style="position:absolute;left:914px;top:702px;" width="10" height="9" viewBox="0 0 10 9"><path d="M1.2 1.5 H7.6 L4.4 6.6 Z" fill="none" stroke="#555" stroke-width="1.05" stroke-linejoin="round"/></svg>
<div class="t" style="left:940.40px;top:700.00px;font-size:13px;line-height:13px;color:#6a6a6a;letter-spacing:-0.254px;">Podaná po lhůtě</div>
<svg style="position:absolute;left:1052.8px;top:702px;" width="10" height="9" viewBox="0 0 10 9"><path d="M1.2 1.5 H7.6 L4.4 6.6 Z" fill="none" stroke="#555" stroke-width="1.05" stroke-linejoin="round"/></svg>
<div class="t" style="left:1080.50px;top:700.00px;font-size:13px;line-height:13px;color:#6a6a6a;letter-spacing:-0.134px;">Listinná podoba</div>
<svg style="position:absolute;left:1192.8px;top:702px;" width="10" height="9" viewBox="0 0 10 9"><path d="M1.2 1.5 H7.6 L4.4 6.6 Z" fill="none" stroke="#555" stroke-width="1.05" stroke-linejoin="round"/></svg>
<div class="t" style="left:1220.40px;top:700.00px;font-size:13px;line-height:13px;color:#6a6a6a;letter-spacing:-0.283px;">Označena jako nepodaná</div>
<svg style="position:absolute;left:1385.5px;top:702px;" width="10" height="9" viewBox="0 0 10 9"><path d="M1.2 1.5 H7.6 L4.4 6.6 Z" fill="none" stroke="#555" stroke-width="1.05" stroke-linejoin="round"/></svg>
<div style="position:absolute;left:182px;top:751px;width:1223px;height:1px;background:#dadada;"></div>
<div style="position:absolute;left:182px;top:776px;width:1223px;height:1px;background:#dadada;"></div>
<div style="position:absolute;left:182px;top:801px;width:1223px;height:1px;background:#dadada;"></div>
<svg style="position:absolute;left:194px;top:735px;" width="18" height="8" viewBox="0 0 18 8"><circle cx="2.5" cy="4" r="1.75" fill="none" stroke="#1f72b3" stroke-width="1.15"/><circle cx="8.2" cy="4" r="1.75" fill="none" stroke="#1f72b3" stroke-width="1.15"/><circle cx="13.9" cy="4" r="1.75" fill="none" stroke="#1f72b3" stroke-width="1.15"/></svg>
<svg style="position:absolute;left:219px;top:730px;" width="18" height="18" viewBox="0 0 18 18"><circle cx="9" cy="9" r="7.6" fill="none" stroke="#1f72b3" stroke-width="1.3"/><circle cx="8.6" cy="5.3" r="0.9" fill="#1f72b3"/><path d="M8.5 7.9 V10.6 Q8.6 11.9 10.1 12.3" fill="none" stroke="#1f72b3" stroke-width="1.2"/></svg>
<div class="t" style="left:256.00px;top:733.00px;font-size:13px;line-height:13px;color:#1e1e1e;letter-spacing:-0.525px;">001</div>
<div class="t" style="left:336.30px;top:733.00px;font-size:13px;line-height:13px;color:#1e1e1e;letter-spacing:-0.146px;">Dodavatel - školení 2</div>
<div class="t" style="left:540.30px;top:733.00px;font-size:13px;line-height:13px;color:#1e1e1e;letter-spacing:0.018px;">12345678</div>
<div class="t" style="left:640.30px;top:733.00px;font-size:13px;line-height:13px;color:#1e1e1e;letter-spacing:-0.109px;">27. 5. 2025 13:22</div>
<div class="t" style="left:790.30px;top:733.00px;font-size:13px;line-height:13px;color:#1e1e1e;letter-spacing:-0.357px;">Otevřena</div>
<svg style="position:absolute;left:997px;top:733px;" width="10" height="10" viewBox="0 0 10 10"><path d="M1.6 1.6 L8.4 8.4 M8.4 1.6 L1.6 8.4" stroke="#cc2229" stroke-width="1.9" stroke-linecap="round"/></svg>
<svg style="position:absolute;left:1137px;top:733px;" width="10" height="10" viewBox="0 0 10 10"><path d="M1.6 1.6 L8.4 8.4 M8.4 1.6 L1.6 8.4" stroke="#cc2229" stroke-width="1.9" stroke-linecap="round"/></svg>
<svg style="position:absolute;left:1303px;top:733px;" width="10" height="10" viewBox="0 0 10 10"><path d="M1.6 1.6 L8.4 8.4 M8.4 1.6 L1.6 8.4" stroke="#cc2229" stroke-width="1.9" stroke-linecap="round"/></svg>
<svg style="position:absolute;left:194px;top:760px;" width="18" height="8" viewBox="0 0 18 8"><circle cx="2.5" cy="4" r="1.75" fill="none" stroke="#1f72b3" stroke-width="1.15"/><circle cx="8.2" cy="4" r="1.75" fill="none" stroke="#1f72b3" stroke-width="1.15"/><circle cx="13.9" cy="4" r="1.75" fill="none" stroke="#1f72b3" stroke-width="1.15"/></svg>
<svg style="position:absolute;left:219px;top:755px;" width="18" height="18" viewBox="0 0 18 18"><circle cx="9" cy="9" r="7.6" fill="none" stroke="#1f72b3" stroke-width="1.3"/><circle cx="8.6" cy="5.3" r="0.9" fill="#1f72b3"/><path d="M8.5 7.9 V10.6 Q8.6 11.9 10.1 12.3" fill="none" stroke="#1f72b3" stroke-width="1.2"/></svg>
<div class="t" style="left:256.00px;top:758.00px;font-size:13px;line-height:13px;color:#1e1e1e;letter-spacing:-0.525px;">002</div>
<div class="t" style="left:336.30px;top:758.00px;font-size:13px;line-height:13px;color:#1e1e1e;letter-spacing:-0.146px;">Dodavatel - školení 3</div>
<div class="t" style="left:540.30px;top:758.00px;font-size:13px;line-height:13px;color:#1e1e1e;letter-spacing:0.018px;">12345678</div>
<div class="t" style="left:640.30px;top:758.00px;font-size:13px;line-height:13px;color:#1e1e1e;letter-spacing:-0.109px;">27. 5. 2025 13:24</div>
<div class="t" style="left:790.30px;top:758.00px;font-size:13px;line-height:13px;color:#1e1e1e;letter-spacing:-0.357px;">Otevřena</div>
<svg style="position:absolute;left:997px;top:758px;" width="10" height="10" viewBox="0 0 10 10"><path d="M1.6 1.6 L8.4 8.4 M8.4 1.6 L1.6 8.4" stroke="#cc2229" stroke-width="1.9" stroke-linecap="round"/></svg>
<svg style="position:absolute;left:1137px;top:758px;" width="10" height="10" viewBox="0 0 10 10"><path d="M1.6 1.6 L8.4 8.4 M8.4 1.6 L1.6 8.4" stroke="#cc2229" stroke-width="1.9" stroke-linecap="round"/></svg>
<svg style="position:absolute;left:1303px;top:758px;" width="10" height="10" viewBox="0 0 10 10"><path d="M1.6 1.6 L8.4 8.4 M8.4 1.6 L1.6 8.4" stroke="#cc2229" stroke-width="1.9" stroke-linecap="round"/></svg>
<svg style="position:absolute;left:194px;top:785px;" width="18" height="8" viewBox="0 0 18 8"><circle cx="2.5" cy="4" r="1.75" fill="none" stroke="#1f72b3" stroke-width="1.15"/><circle cx="8.2" cy="4" r="1.75" fill="none" stroke="#1f72b3" stroke-width="1.15"/><circle cx="13.9" cy="4" r="1.75" fill="none" stroke="#1f72b3" stroke-width="1.15"/></svg>
<svg style="position:absolute;left:219px;top:780px;" width="18" height="18" viewBox="0 0 18 18"><circle cx="9" cy="9" r="7.6" fill="none" stroke="#1f72b3" stroke-width="1.3"/><circle cx="8.6" cy="5.3" r="0.9" fill="#1f72b3"/><path d="M8.5 7.9 V10.6 Q8.6 11.9 10.1 12.3" fill="none" stroke="#1f72b3" stroke-width="1.2"/></svg>
<div class="t" style="left:256.00px;top:783.00px;font-size:13px;line-height:13px;color:#1e1e1e;letter-spacing:-0.525px;">003</div>
<div class="t" style="left:336.30px;top:783.00px;font-size:13px;line-height:13px;color:#1e1e1e;letter-spacing:-0.146px;">Dodavatel - školení 8</div>
<div class="t" style="left:540.30px;top:783.00px;font-size:13px;line-height:13px;color:#1e1e1e;letter-spacing:0.018px;">12345678</div>
<div class="t" style="left:640.30px;top:783.00px;font-size:13px;line-height:13px;color:#1e1e1e;letter-spacing:-0.109px;">27. 5. 2025 13:25</div>
<div class="t" style="left:790.30px;top:783.00px;font-size:13px;line-height:13px;color:#1e1e1e;letter-spacing:-0.357px;">Otevřena</div>
<svg style="position:absolute;left:997px;top:783px;" width="10" height="10" viewBox="0 0 10 10"><path d="M1.6 1.6 L8.4 8.4 M8.4 1.6 L1.6 8.4" stroke="#cc2229" stroke-width="1.9" stroke-linecap="round"/></svg>
<svg style="position:absolute;left:1137px;top:783px;" width="10" height="10" viewBox="0 0 10 10"><path d="M1.6 1.6 L8.4 8.4 M8.4 1.6 L1.6 8.4" stroke="#cc2229" stroke-width="1.9" stroke-linecap="round"/></svg>
<svg style="position:absolute;left:1303px;top:783px;" width="10" height="10" viewBox="0 0 10 10"><path d="M1.6 1.6 L8.4 8.4 M8.4 1.6 L1.6 8.4" stroke="#cc2229" stroke-width="1.9" stroke-linecap="round"/></svg>
<svg style="position:absolute;left:194px;top:810px;" width="18" height="8" viewBox="0 0 18 8"><circle cx="2.5" cy="4" r="1.75" fill="none" stroke="#1f72b3" stroke-width="1.15"/><circle cx="8.2" cy="4" r="1.75" fill="none" stroke="#1f72b3" stroke-width="1.15"/><circle cx="13.9" cy="4" r="1.75" fill="none" stroke="#1f72b3" stroke-width="1.15"/></svg>
<svg style="position:absolute;left:219px;top:805px;" width="18" height="18" viewBox="0 0 18 18"><circle cx="9" cy="9" r="7.6" fill="none" stroke="#1f72b3" stroke-width="1.3"/><circle cx="8.6" cy="5.3" r="0.9" fill="#1f72b3"/><path d="M8.5 7.9 V10.6 Q8.6 11.9 10.1 12.3" fill="none" stroke="#1f72b3" stroke-width="1.2"/></svg>
<div class="t" style="left:256.00px;top:808.00px;font-size:13px;line-height:13px;color:#1e1e1e;letter-spacing:-0.525px;">004</div>
<div class="t" style="left:336.30px;top:808.00px;font-size:13px;line-height:13px;color:#1e1e1e;letter-spacing:-0.146px;">Dodavatel - školení 8</div>
<div class="t" style="left:540.30px;top:808.00px;font-size:13px;line-height:13px;color:#1e1e1e;letter-spacing:0.018px;">12345678</div>
<div class="t" style="left:640.30px;top:808.00px;font-size:13px;line-height:13px;color:#1e1e1e;letter-spacing:-0.109px;">27. 5. 2025 13:35</div>
<div class="t" style="left:790.30px;top:808.00px;font-size:13px;line-height:13px;color:#1e1e1e;letter-spacing:-0.222px;">Otevírání zahájeno</div>
<svg style="position:absolute;left:997px;top:808px;" width="10" height="10" viewBox="0 0 10 10"><path d="M1.6 1.6 L8.4 8.4 M8.4 1.6 L1.6 8.4" stroke="#cc2229" stroke-width="1.9" stroke-linecap="round"/></svg>
<svg style="position:absolute;left:1136px;top:808px;" width="12" height="10" viewBox="0 0 12 10"><path d="M2 5.4 L4.9 8 L10.8 2" fill="none" stroke="#33b933" stroke-width="2.1" stroke-linecap="round" stroke-linejoin="round"/></svg>
<svg style="position:absolute;left:1303px;top:808px;" width="10" height="10" viewBox="0 0 10 10"><path d="M1.6 1.6 L8.4 8.4 M8.4 1.6 L1.6 8.4" stroke="#cc2229" stroke-width="1.9" stroke-linecap="round"/></svg>
</body></html>
